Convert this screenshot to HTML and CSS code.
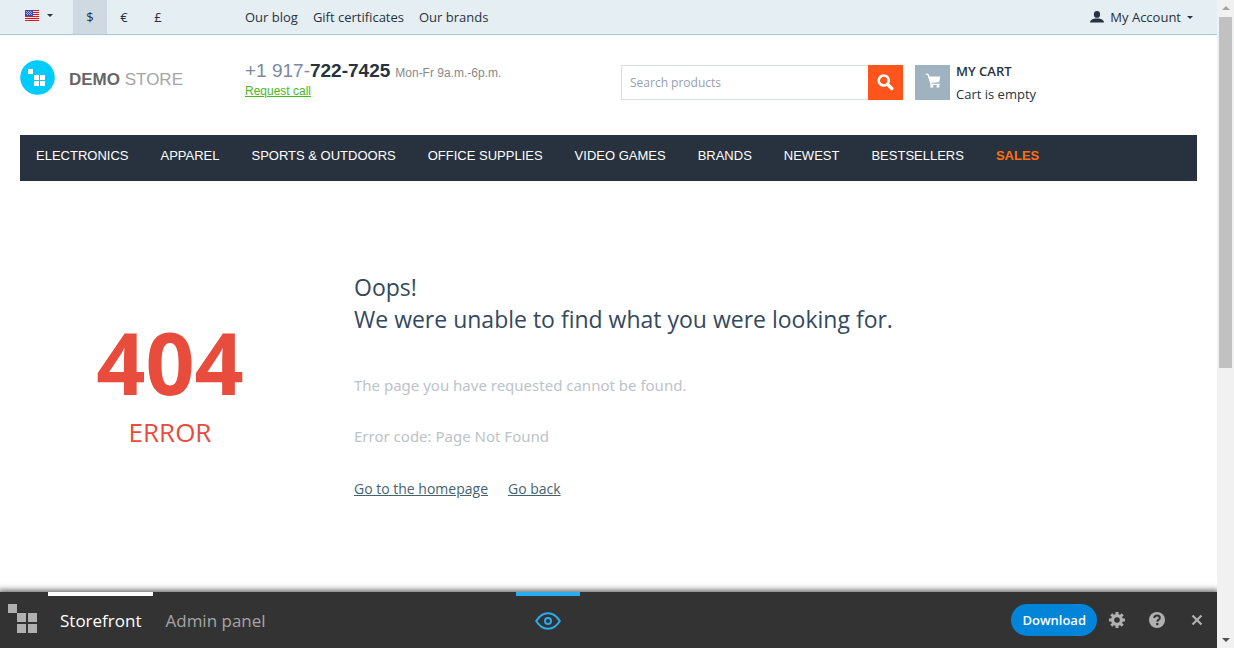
FILE: index.html
```html
<!DOCTYPE html>
<html lang="en">
<head>
<meta charset="utf-8">
<title>Demo Store</title>
<link rel="stylesheet" href="styles.css">
</head>
<body>
<div class="window">
  <div class="pane">
    <div class="page">
      <div class="topbar">
        <div class="switchers">
          <button class="language" type="button" aria-label="Language">
            <svg width="14" height="11" viewBox="0 0 14 11" shape-rendering="crispEdges"><path fill="#f4dfe2" d="M0 0h14v11H0z"/><path fill="#cf2027" d="M0 0h14v1H0zM0 2h14v1H0zM0 4h14v1H0zM0 6h14v1H0zM0 8h14v1H0zM0 10h14v1H0z"/><path fill="#4048a8" d="M0 0h8v6H0z"/><path fill="#a4aae0" d="M1 1h1v1H1zM3 1h1v1H3zM5 1h1v1H5zM2 2h1v1H2zM4 2h1v1H4zM6 2h1v1H6zM1 3h1v1H1zM3 3h1v1H3zM5 3h1v1H5zM2 4h1v1H2zM4 4h1v1H4zM6 4h1v1H6z"/></svg>
            <span class="caret"></span>
          </button>
          <div class="currencies">
            <button class="currency currency-active" type="button">$</button>
            <button class="currency" type="button">€</button>
            <button class="currency" type="button">£</button>
          </div>
        </div>
        <nav class="quick-links">
          <a href="#">Our blog</a>
          <a href="#">Gift certificates</a>
          <a href="#">Our brands</a>
        </nav>
        <button class="account" type="button">
          <svg width="14" height="12" viewBox="0 0 14 12" fill="#27323e"><ellipse cx="7" cy="3.4" rx="3.1" ry="3.4"/><path d="M0 11.5c0-2.200 2-3.600 5-4.100h4c3 .5 5 1.900 5 4.100z"/></svg>
          <span>My Account</span>
          <span class="caret"></span>
        </button>
      </div>

      <header class="header">
        <a class="logo" href="#">
          <svg width="35" height="35" viewBox="0 0 35 35"><circle cx="17.500" cy="17.500" r="17.300" fill="#00cbff"/><path fill="#fff" d="M8 9h5v5H8zM14 15h5v5h-5zM20 15h5v5h-5zM14 21h5v5h-5zM20 21h5v5h-5z"/></svg>
          <span class="logo-text"><b>DEMO</b> STORE</span>
        </a>
        <div class="contact">
          <div class="phone"><span class="phone-number">+1 917-<b>722-7425</b></span><span class="hours">Mon-Fr 9a.m.-6p.m.</span></div>
          <a class="request" href="#">Request call</a>
        </div>
        <form class="search">
          <input class="search-input" type="text" placeholder="Search products" aria-label="Search products">
          <button class="search-button" type="button" aria-label="Search">
            <svg width="17" height="17" viewBox="0 0 17 17" fill="none" stroke="#fff"><circle cx="6.700" cy="6.500" r="5" stroke-width="2.600"/><path d="M10.500 10.200l4.300 4.300" stroke-width="3.400" stroke-linecap="round"/></svg>
          </button>
        </form>
        <a class="cart" href="#">
          <span class="cart-icon">
            <svg width="16" height="15" viewBox="0 0 16 15" fill="#fff"><path d="M.3 1.200C.3.300 3 .3 3.600 1l1.100 2.400h10.600l-1.100 5.500-7.800 1 .3.900h8v1.200H5.600L2.500 2.100z"/><circle cx="6.800" cy="13.300" r="1.500"/><circle cx="13" cy="13.300" r="1.500"/></svg>
          </span>
          <span class="cart-text"><b>MY CART</b><span>Cart is empty</span></span>
        </a>
      </header>

      <nav class="menu">
        <a href="#">ELECTRONICS</a>
        <a href="#">APPAREL</a>
        <a href="#">SPORTS &amp; OUTDOORS</a>
        <a href="#">OFFICE SUPPLIES</a>
        <a href="#">VIDEO GAMES</a>
        <a href="#">BRANDS</a>
        <a href="#">NEWEST</a>
        <a href="#">BESTSELLERS</a>
        <a class="menu-sales" href="#">SALES</a>
      </nav>

      <main class="exception">
        <div class="code"><span class="code-number">404</span><span class="code-label">ERROR</span></div>
        <div class="details">
          <h1>Oops!<br>We were unable to find what you were looking for.</h1>
          <p>The page you have requested cannot be found.</p>
          <p>Error code: Page Not Found</p>
          <div class="actions"><a href="#">Go to the homepage</a><a href="#">Go back</a></div>
        </div>
      </main>
    </div>

    <footer class="demobar">
      <svg class="demo-logo" width="29" height="29" viewBox="0 0 29 29" fill="#b0b0b0"><path d="M0 0h9v9H0zM9 9h9v9H9zM20 9h9v9h-9zM9 20h9v9H9zM20 20h9v9h-9z"/></svg>
      <nav class="tabs">
        <a class="tab tab-active" href="#">Storefront</a>
        <a class="tab" href="#">Admin panel</a>
      </nav>
      <button class="preview" type="button" aria-label="Preview">
        <svg width="26" height="18" viewBox="0 0 26 18" fill="none" stroke="#26aef0" stroke-width="2"><path d="M1.200 9C4 4.500 8 1.200 13 1.200S22 4.500 24.800 9C22 13.500 18 16.800 13 16.800S4 13.500 1.200 9z"/><circle cx="13" cy="9" r="3"/></svg>
      </button>
      <div class="tools">
        <button class="download" type="button">Download</button>
        <button class="tool" type="button" aria-label="Settings">
          <svg width="16" height="16" viewBox="0 0 16 16" fill="none" stroke="#b0b0b0"><circle cx="8" cy="8" r="4.400" stroke-width="3.200"/><path stroke-width="3" d="M8 0v3M8 13v3M0 8h3M13 8h3M2.300 2.300l2 2M11.700 11.700l2 2M2.300 13.700l2-2M11.700 4.300l2-2"/></svg>
        </button>
        <button class="tool" type="button" aria-label="Help">
          <svg width="16" height="16" viewBox="0 0 16 16"><circle cx="8" cy="8" r="8" fill="#b0b0b0"/><path d="M5.300 6C5.300 2.600 10.800 2.700 10.800 5.900 10.800 7.700 8.300 7.700 8.300 9.700" fill="none" stroke="#333" stroke-width="2"/><path d="M7.200 11h2.200v2.200H7.200z" fill="#333"/></svg>
        </button>
        <button class="tool" type="button" aria-label="Close">
          <svg width="16" height="16" viewBox="0 0 16 16" stroke="#b0b0b0" stroke-width="2.200"><path d="M3.500 3.500l9 9M12.500 3.500l-9 9"/></svg>
        </button>
      </div>
    </footer>
  </div>

  <div class="scrollbar">
    <span class="arrow arrow-up"></span>
    <span class="track"><span class="thumb"></span></span>
    <span class="arrow arrow-down"></span>
  </div>
</div>
</body>
</html>
```

FILE: styles.css
```css
* { box-sizing: border-box; }

body {
  margin: 0;
  font: 13px/20px "Open Sans", "Noto Sans", sans-serif;
  color: #27323e;
  background: #fff;
}

a { color: inherit; text-decoration: none; }

button {
  border: 0;
  padding: 0;
  background: none;
  color: inherit;
  font: inherit;
  cursor: pointer;
}

svg { display: block; flex: none; }

.window { display: flex; height: 100vh; }

.pane { flex: 1; min-width: 0; display: flex; flex-direction: column; }

.page { flex: 1; min-height: 0; overflow: hidden; }

/* Top bar */
.topbar {
  display: grid;
  grid-template-columns: 225px 1fr auto;
  align-items: center;
  padding: 0 24px 0 20px;
  background: #e5eef3;
  border-bottom: 1px solid #aacbda;
}

.switchers { display: flex; align-items: center; }

.language { display: flex; align-items: center; gap: 8px; width: 53px; padding: 0 0 3px 5px; }

.caret {
  border: 3px solid transparent;
  border-top-color: #27323e;
  border-bottom: 0;
}

.currencies { display: flex; }

.currency { width: 34px; height: 34px; }

.currency-active { background: #cfd9e2; }

.quick-links { display: flex; gap: 15px; }

.account { display: flex; align-items: center; gap: 6px; }

/* Header */
.header {
  display: grid;
  grid-template-columns: 225px 1fr 282px 294px;
  align-items: start;
  padding: 25px 20px 35px;
}

.logo { display: flex; align-items: flex-start; gap: 14px; }

.logo-text {
  padding-top: 2px;
  font: 17px/35px "Liberation Sans", Arial, sans-serif;
  color: #a5a5a5;
}

.logo-text b { color: #666; }

.contact { padding-top: 2px; font: 12px/18px "Liberation Sans", Arial, sans-serif; }

.phone { display: flex; align-items: baseline; gap: 5px; }

.phone-number { font-size: 19px; color: #7a89a4; }

.phone-number b { color: #27323e; }

.hours { color: #888; }

.request { color: #47b820; text-decoration: underline; }

.search, .cart { margin-top: 5px; }

.search { display: flex; }

.search-input {
  flex: 1;
  min-width: 0;
  height: 35px;
  padding: 0 8px;
  border: 1px solid #d8dee8;
  border-right: 0;
  font: inherit;
  font-size: 12px;
}

.search-input::placeholder { color: #94a1b5; opacity: 1; }

.search-button {
  display: grid;
  place-items: center;
  width: 35px;
  height: 35px;
  background: #ff541b;
}

.cart { display: flex; gap: 6px; height: 35px; padding-left: 12px; }

.cart-icon {
  display: grid;
  place-items: center;
  width: 35px;
  height: 35px;
  padding-bottom: 4px;
  background: #9fb2c0;
}

.cart-text { display: grid; align-content: start; row-gap: 3px; margin-top: -4px; }

.cart-text b { font-weight: 600; }

/* Main menu */
.menu {
  display: flex;
  gap: 32px;
  margin: 0 20px;
  padding: 11px 16px 15px;
  background: #27323e;
  color: #fff;
  font: 13px/20px "Liberation Sans", Arial, sans-serif;
}

.menu-sales { color: #ff7012; font-weight: bold; }

/* 404 message */
.exception { display: grid; grid-template-columns: 300px 1fr; column-gap: 34px; padding: 90px 20px 0; }

.code { display: grid; align-content: start; text-align: center; color: #e84c3d; padding-top: 49px; }

.code-number { font-size: 86px; line-height: 84px; font-weight: bold; }

.code-label { font-size: 26px; line-height: 56px; }

.details h1 { margin: 0 0 38px; font-size: 23px; line-height: 32px; font-weight: 400; color: #34495e; }

.details p { margin: 0 0 27px; font-family: "Noto Sans", sans-serif; font-size: 15px; line-height: 24px; color: #bdc3c7; }

.actions { display: flex; gap: 20px; font-size: 14px; line-height: 28px; color: #466271; }

.actions a { text-decoration: underline; }

/* Demo toolbar */
.demobar {
  position: relative;
  display: flex;
  height: 56px;
  padding: 0 12px 0 8px;
  background: #333;
  color: #a5a5a5;
  box-shadow: 0 0 6px 2px rgba(0, 0, 0, .6);
}

.demo-logo { margin: 12px 11px 0 0; }

.tabs { display: flex; }

.tab {
  padding: 0 12px;
  border-top: 4px solid transparent;
  font: 17px/50px "Open Sans", "Noto Sans", sans-serif;
}

.tab-active { border-top-color: #fff; color: #fff; }

.preview {
  position: absolute;
  left: 45%;
  top: 0;
  display: grid;
  place-items: center;
  width: 64px;
  height: 56px;
  padding-bottom: 2px;
  border-top: 4px solid #26aef0;
  transform: translateX(-50%);
}

.tools { display: flex; align-items: center; gap: 24px; margin-left: auto; }

.download {
  height: 32px;
  padding: 0 11px;
  margin-right: -12px;
  border-radius: 16px;
  background: #0284d8;
  color: #fff;
  font-weight: 600;
}

/* Scrollbar */
.scrollbar {
  position: relative;
  display: flex;
  flex-direction: column;
  align-items: center;
  width: 17px;
  background: #f1f1f1;
}

.arrow { border: 4px solid transparent; margin: 6px 0; }

.arrow-up { border-top: 0; border-bottom-color: #a3a3a3; margin-bottom: 7px; }

.arrow-down { border-bottom: 0; border-top-color: #505050; }

.track { flex: 1; width: 13px; }

.thumb { display: block; height: 57%; background: #c1c1c1; }
```
